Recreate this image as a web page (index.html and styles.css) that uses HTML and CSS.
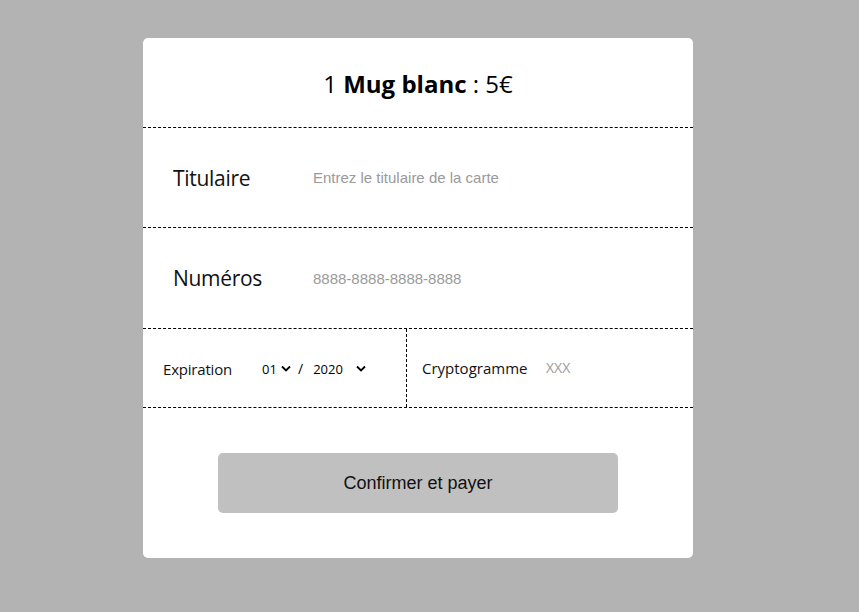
FILE: index.html
```html
<!DOCTYPE html>
<html lang="fr">
<head>
<meta charset="utf-8">
<title>Paiement</title>
<link rel="stylesheet" href="styles.css">
</head>
<body>
<form class="card">
  <div class="summary"><span>1 <strong>Mug blanc</strong> : 5€</span></div>
  <div class="field-row">
    <label class="field-label" for="holder">Titulaire</label>
    <input class="field-input" id="holder" type="text" placeholder="Entrez le titulaire de la carte">
  </div>
  <div class="field-row tall">
    <label class="field-label" for="number">Numéros</label>
    <input class="field-input" id="number" type="text" placeholder="8888-8888-8888-8888">
  </div>
  <div class="split-row">
    <div class="expiry">
      <span class="small-label">Expiration</span>
      <span class="select-wrap">
        <select class="select month"><option>01</option></select>
        <svg class="chev" width="10" height="7" viewBox="0 0 10 7"><path d="M1 1.5l4 4 4-4" fill="none" stroke="#000" stroke-width="1.8"/></svg>
      </span>
      <span class="slash">/</span>
      <span class="select-wrap">
        <select class="select year"><option>2020</option></select>
        <svg class="chev chev-year" width="10" height="7" viewBox="0 0 10 7"><path d="M1 1.5l4 4 4-4" fill="none" stroke="#000" stroke-width="1.8"/></svg>
      </span>
    </div>
    <div class="cvc">
      <label class="small-label" for="cvc">Cryptogramme</label>
      <input class="cvc-input" id="cvc" type="text" placeholder="XXX">
    </div>
  </div>
  <div class="actions">
    <button class="pay" type="button">Confirmer et payer</button>
  </div>
</form>
</body>
</html>
```
FILE: styles.css
```css
html, body {
  margin: 0;
  padding: 0;
}
body {
  background: #b3b3b3;
  font-family: "Open Sans", "Noto Sans", sans-serif;
  color: #000;
  padding-top: 38px;
  height: 612px;
  box-sizing: border-box;
}
.card {
  width: 550px;
  margin-left: 143px;
  background: #fff;
  border-radius: 5px;
  display: flex;
  flex-direction: column;
}
.summary {
  border-bottom: 1px dashed #000;
  display: flex;
  align-items: center;
  justify-content: center;
  font-size: 24px;
  letter-spacing: 0;
  padding-top: 2px;
  box-sizing: border-box;
  height: 90px;
}
.summary strong {
  font-weight: 700;
}
.field-row {
  height: 99px;
  border-bottom: 1px dashed #000;
  display: flex;
  align-items: center;
  padding-left: 30px;
}
.field-row.tall {
  height: 100px;
}
.field-label {
  width: 139px;
  font-size: 21px;
  letter-spacing: -0.3px;
  color: #111;
}
.field-input {
  border: none;
  outline: none;
  padding: 0 1px;
  font-family: "Liberation Sans", Arial, sans-serif;
  font-size: 15px;
  width: 300px;
  color: #000;
}
.field-input::placeholder,
.cvc-input::placeholder {
  color: #9a9a9a;
}
.split-row {
  height: 78px;
  border-bottom: 1px dashed #000;
  display: flex;
}
.expiry {
  width: 243px;
  padding-left: 20px;
  padding-top: 1px;
  border-right: 1px dashed #000;
  display: flex;
  align-items: center;
}
.small-label {
  font-size: 15px;
  letter-spacing: -0.2px;
  color: #111;
}
.expiry .small-label {
  width: 98px;
}
.select-wrap {
  display: inline-flex;
  align-items: center;
}
.select {
  appearance: none;
  -webkit-appearance: none;
  border: none;
  background: transparent;
  font-family: "Open Sans", "Noto Sans", sans-serif;
  font-size: 13px;
  padding: 0;
  color: #000;
  outline: none;
}
.month { width: 17px; margin-left: 1px; }
.year { width: 31px; }
.chev { margin-left: 2px; }
.chev-year { margin-left: 12px; }
.slash {
  font-size: 14px;
  margin: 0 10px 0 7px;
}
.cvc {
  flex: 1;
  display: flex;
  align-items: center;
  padding-left: 15px;
  padding-bottom: 1px;
}
.cvc .small-label {
  width: 124px;
  letter-spacing: 0;
}
.cvc-input {
  border: none;
  outline: none;
  padding: 0;
  font-family: "Open Sans", "Noto Sans", sans-serif;
  font-size: 14px;
  width: 120px;
}
.actions {
  padding: 45px 0 45px 75px;
}
.pay {
  width: 400px;
  height: 60px;
  border: none;
  border-radius: 5px;
  background: #c0c0c0;
  font-family: "Liberation Sans", Arial, sans-serif;
  font-size: 18px;
  color: #111;
  padding: 0;
}
```
